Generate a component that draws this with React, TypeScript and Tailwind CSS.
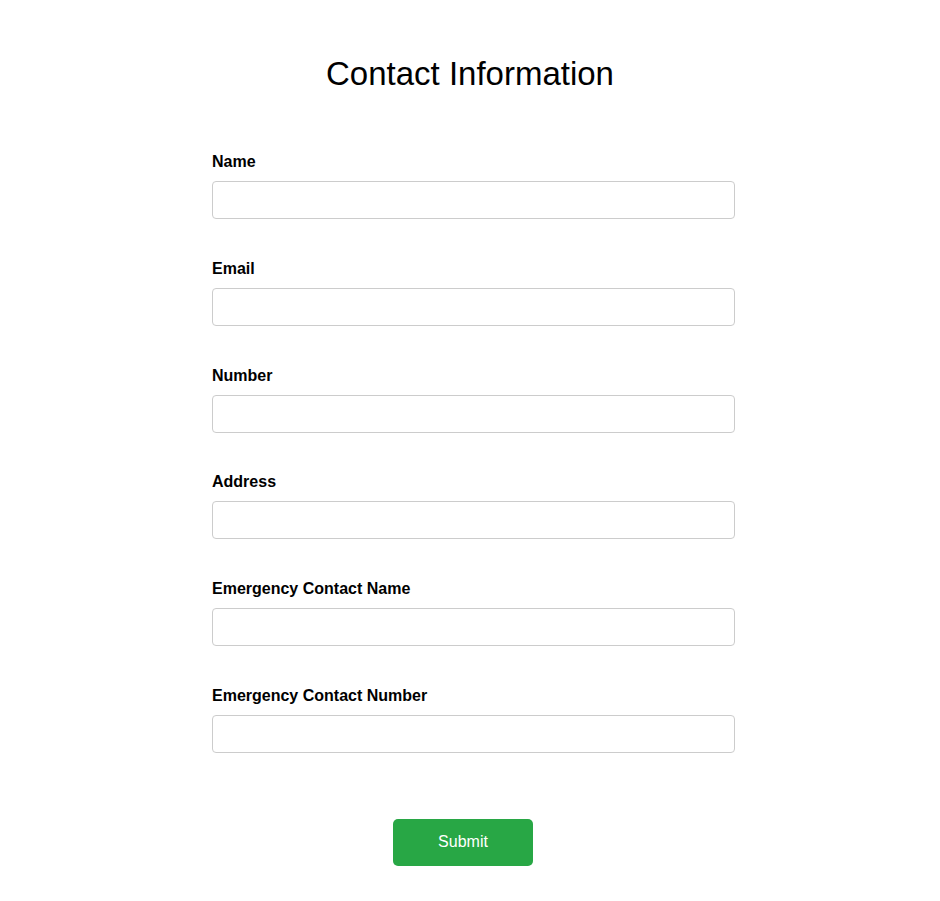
export default function App() {
  const fields = [
    "Name",
    "Email",
    "Number",
    "Address",
    "Emergency Contact Name",
    "Emergency Contact Number",
  ];
  return (
    <div
      className="min-h-[901px] w-[940px] bg-white text-black"
      style={{ fontFamily: '"Liberation Sans", Arial, sans-serif' }}
    >
      <h1 className="pt-[55px] text-center text-[33px] leading-[38px] font-normal">
        Contact Information
      </h1>
      <form className="ml-[212px] mt-[60px] w-[523px] flex flex-col">
        {fields.map((f) => (
          <div key={f} className="flex flex-col mb-[40.8px]">
            <label className="block text-[16px] leading-[18px] font-bold mb-[10px]">
              {f}
            </label>
            <input
              type="text"
              className="h-[38px] w-full rounded-[4px] border border-[#cccccc] bg-white px-2 outline-none"
            />
          </div>
        ))}
      </form>
      <div className="ml-[393px] mt-[25px]">
        <button
          type="button"
          className="h-[47px] w-[140px] rounded-[5px] bg-[#28a745] text-white text-[16px] leading-[18px] pb-[1px]"
        >
          Submit
        </button>
      </div>
    </div>
  );
}
